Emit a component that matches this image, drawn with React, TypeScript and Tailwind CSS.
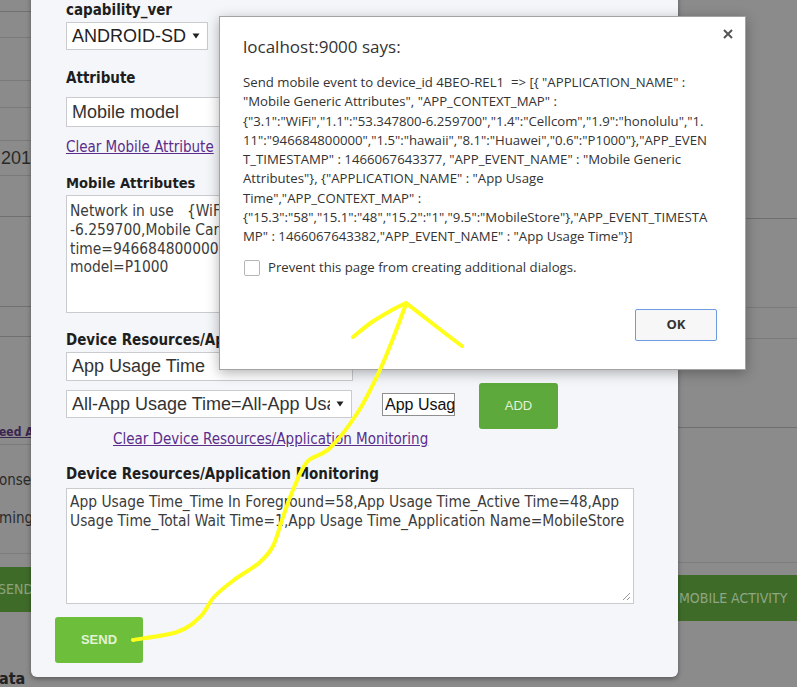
import React from "react";

const TAH = "font-['DejaVu_Sans_Condensed','DejaVu_Sans',sans-serif]";

function smooth(pts: [number, number][]) {
  let d = `M${pts[0][0]},${pts[0][1]}`;
  for (let i = 0; i < pts.length - 1; i++) {
    const p0 = pts[i - 1] || pts[i];
    const p1 = pts[i];
    const p2 = pts[i + 1];
    const p3 = pts[i + 2] || p2;
    const c1 = [p1[0] + (p2[0] - p0[0]) / 6, p1[1] + (p2[1] - p0[1]) / 6];
    const c2 = [p2[0] - (p3[0] - p1[0]) / 6, p2[1] - (p3[1] - p1[1]) / 6];
    d += ` C${c1[0]},${c1[1]} ${c2[0]},${c2[1]} ${p2[0]},${p2[1]}`;
  }
  return d;
}

function Caret() {
  return (
    <svg width="8" height="6" viewBox="0 0 8 6" className="shrink-0">
      <path d="M0.5 0.5 L7.5 0.5 L4 5.5 Z" fill="#222" />
    </svg>
  );
}

export default function App() {
  const shaft = smooth([
    [133, 640],
    [177, 632],
    [200, 617],
    [214, 597],
    [234, 580],
    [259, 563],
    [273, 546],
    [283, 517],
    [293, 490],
    [307, 462],
    [330, 448],
    [358, 412],
    [379, 372],
    [394, 336],
    [406, 304],
  ]);
  const leftWing = smooth([
    [353, 337],
    [372, 322],
    [392, 310],
    [406, 303],
  ]);
  const rightWing = smooth([
    [406, 303],
    [428, 320],
    [446, 334],
    [462, 346],
  ]);

  const msg = [
    'Send mobile event to device_id 4BEO-REL1  => [{ "APPLICATION_NAME" :',
    '"Mobile Generic Attributes", "APP_CONTEXT_MAP" :',
    '{"3.1":"WiFi","1.1":"53.347800-6.259700","1.4":"Cellcom","1.9":"honolulu","1.',
    '11":"946684800000","1.5":"hawaii","8.1":"Huawei","0.6":"P1000"},"APP_EVEN',
    'T_TIMESTAMP" : 1466067643377, "APP_EVENT_NAME" : "Mobile Generic',
    'Attributes"}, {"APPLICATION_NAME" : "App Usage',
    'Time","APP_CONTEXT_MAP" :',
    '{"15.3":"58","15.1":"48","15.2":"1","9.5":"MobileStore"},"APP_EVENT_TIMESTA',
    'MP" : 1466067643382,"APP_EVENT_NAME" : "App Usage Time"}]',
  ];

  return (
    <div className="relative w-[797px] h-[687px] overflow-hidden bg-[#8b8b8b]">
      {/* background page (dimmed) */}
      <div className={`grid grid-cols-[31px_1fr_119px] h-full ${TAH} text-[#262626]`}>
        <div className="flex flex-col overflow-hidden">
          <div className="h-[12px] shrink-0 border-b border-[#707070]" />
          <div className="h-[26px] shrink-0 border-b border-[#7a7a7a]" />
          <div className="h-[43px] shrink-0 border-b border-[#7a7a7a]" />
          <div className="h-[27px] shrink-0 border-b border-[#7a7a7a]" />
          <div className="h-[33px] shrink-0 border-b border-[#7a7a7a]" />
          <div className="h-[35px] shrink-0 border-b border-[#7a7a7a] flex items-center">
            <span className="whitespace-nowrap ml-[1px] font-['Liberation_Sans',sans-serif] text-[18px] text-[#2a2a2a]">201</span>
          </div>
          <div className="h-[41px] shrink-0 border-b border-[#707070]" />
          <div className="h-[90px] shrink-0 border-b border-[#707070]" />
          <div className="h-[30px] shrink-0 border-b border-[#707070]" />
          <div className="h-[83px] shrink-0" />
          <div className="h-[25px] shrink-0 flex items-center border-b border-[#7a7a7a]">
            <span className="whitespace-nowrap ml-[-1px] text-[12px] font-bold underline text-[#3a2450]">eed A</span>
          </div>
          <div className="h-[44px] shrink-0 flex items-end">
            <span className="whitespace-nowrap ml-[-1px] text-[15px] leading-[18px] text-[#2a2a2a]">onse</span>
          </div>
          <div className="h-[38px] shrink-0 flex items-end">
            <span className="whitespace-nowrap ml-[-1px] text-[15px] leading-[18px] text-[#2a2a2a]">ming</span>
          </div>
          <div className="h-[27px] shrink-0 border-b border-[#7d7d7d]" />
          <div className="h-[13px] shrink-0" />
          <div className="h-[45px] shrink-0 bg-[#3f6b29] flex items-center overflow-hidden">
            <span className="whitespace-nowrap ml-[-2px] text-[14px] text-[#8ba47e]">SEND</span>
          </div>
          <div className="flex-1 flex items-end">
            <span className="whitespace-nowrap ml-[-1px] text-[16px] font-bold leading-[16px] text-[#222]">ata</span>
          </div>
        </div>
        <div />
        <div className="flex flex-col">
          <div className="h-[219px] shrink-0 border-b border-[#6f6f6f]" />
          <div className="h-[89px] shrink-0 border-b border-[#7a7a7a]" />
          <div className="h-[31px] shrink-0 border-b border-[#7a7a7a]" />
          <div className="h-[89px] shrink-0 border-b border-[#6f6f6f]" />
          <div className="h-[135px] shrink-0 border-b border-[#7d7d7d]" />
          <div className="h-[12px] shrink-0" />
          <div className="h-[46px] shrink-0 bg-[#3f6b29] flex items-center pl-[1px]">
            <span className="whitespace-nowrap text-[14px] text-[#8fa684]">MOBILE ACTIVITY</span>
          </div>
        </div>
      </div>

      {/* modal */}
      <div className={`absolute left-[31px] top-[-12px] w-[647px] h-[689px] rounded-b-[6px] bg-[#f4f6fa] shadow-[0_2px_5px_rgba(0,0,0,0.35)] ${TAH}`}>
        <div className="flex flex-col items-start pl-[35px] pt-[13px]">
          <div className="h-[18px] leading-[18px] text-[15px] font-bold text-[#1e1e1e]">capability_ver</div>
          <div className="mt-[3px] h-[28px] w-[142px] bg-white border border-[#c9cbcf] flex items-center justify-between pl-[5px] pr-[7px] font-['Liberation_Sans',sans-serif] text-[18px] text-[#222]">
            <span>ANDROID-SD</span>
            <Caret />
          </div>
          <div className="mt-[19px] h-[18px] leading-[18px] text-[15px] font-bold text-[#1e1e1e]">Attribute</div>
          <div className="mt-[10px] h-[30px] w-[287px] bg-white border border-[#c9cbcf] flex items-center pl-[5px] font-['Liberation_Sans',sans-serif] text-[18px] text-[#333]">
            Mobile model
          </div>
          <div className="mt-[11px] h-[18px] leading-[18px] text-[15px] underline text-[#5b2d8a]">Clear Mobile Attribute</div>
          <div className="mt-[18px] h-[18px] leading-[18px] text-[14.6px] font-bold text-[#1e1e1e]">Mobile Attributes</div>
          <div className="mt-[3px] h-[118px] w-[568px] bg-white border border-[#c9cbcf] px-[3px] pt-[6px] text-[15.4px] leading-[18.8px] text-[#3c3c3c] whitespace-pre overflow-hidden">
            <div>Network in use   {"{"}WiFi{"}"},Location=53.347800</div>
            <div>-6.259700,Mobile Carrier=Cellcom,City=honolulu,Birth</div>
            <div>time=946684800000,State=hawaii,Manufacturer=Huawei,Mobile</div>
            <div>model=P1000</div>
          </div>
          <div className="mt-[18px] h-[18px] leading-[18px] text-[15px] font-bold text-[#1e1e1e] whitespace-nowrap">Device Resources/Application Monitoring</div>
          <div className="mt-[3px] h-[29px] w-[287px] bg-white border border-[#c9cbcf] flex items-center pl-[5px] font-['Liberation_Sans',sans-serif] text-[18px] text-[#333]">
            App Usage Time
          </div>
          <div className="mt-[2px] flex items-start">
            <div className="mt-[7px] h-[28px] w-[286px] bg-white border border-[#c9cbcf] flex items-center justify-between pl-[5px] pr-[7px] font-['Liberation_Sans',sans-serif] text-[18px] text-[#333]">
              <span className="whitespace-nowrap overflow-hidden w-[258px]">All-App Usage Time=All-App Usage Time</span>
              <Caret />
            </div>
            <div className="ml-[30px] mt-[10px] h-[23px] w-[73px] bg-white border border-[#8f8f8f] flex items-center pl-[2px] overflow-hidden font-['Liberation_Sans',sans-serif] text-[16px] text-[#111] whitespace-nowrap">
              App Usage
            </div>
            <div className="ml-[24px] h-[46px] w-[79px] rounded-[3px] bg-[#5da93b] flex items-center justify-center font-['Liberation_Sans',sans-serif] text-[13px] text-[#e2f2d6]">
              ADD
            </div>
          </div>
          <div className="mt-[1px] ml-[47px] h-[18px] leading-[18px] text-[15px] underline text-[#5b2d8a] whitespace-nowrap">Clear Device Resources/Application Monitoring</div>
          <div className="mt-[17px] h-[18px] leading-[18px] text-[15px] font-bold text-[#1e1e1e] whitespace-nowrap">Device Resources/Application Monitoring</div>
          <div className="relative mt-[5px] h-[116px] w-[568px] bg-white border border-[#c9cbcf] px-[3px] pt-[4px] text-[15.4px] leading-[19px] text-[#3c3c3c] whitespace-pre">
            <div>App Usage Time_Time In Foreground=58,App Usage Time_Active Time=48,App</div>
            <div>Usage Time_Total Wait Time=1,App Usage Time_Application Name=MobileStore</div>
            <svg width="9" height="9" viewBox="0 0 9 9" className="absolute right-[2px] bottom-[2px]">
              <path d="M8 1 L1 8 M8 5 L5 8" stroke="#9a9a9a" strokeWidth="1" />
            </svg>
          </div>
          <div className="mt-[13px] ml-[-11px] h-[46px] w-[88px] rounded-[3px] bg-[#6cbe3b] flex items-center justify-center font-['Liberation_Sans',sans-serif] font-bold text-[13px] text-[#e3f3d6]">
            SEND
          </div>
        </div>
      </div>

      {/* alert dialog */}
      <div className="absolute left-[219px] top-[16px] w-[527px] h-[354px] bg-white border border-[#a3a3a3] shadow-[0_3px_12px_rgba(0,0,0,0.3)] font-['Open_Sans',sans-serif] text-[#333]">
        <svg width="10" height="10" viewBox="0 0 10 10" className="absolute right-[12px] top-[12px]">
          <path d="M1 1 L9 9 M9 1 L1 9" stroke="#555" strokeWidth="2" />
        </svg>
        <div className="flex flex-col pl-[23px] pt-[19px] pr-[28px]">
          <div className="h-[22px] leading-[22px] text-[17px] text-[#333]">localhost:9000 says:</div>
          <div className="mt-[15px] text-[13.2px] leading-[19.3px] text-[#333]">
            {msg.map((l, i) => (
              <div key={i} className="whitespace-pre">{l}</div>
            ))}
          </div>
          <div className="mt-[11px] h-[20px] flex items-center gap-[8px]">
            <div className="w-[16px] h-[16px] ml-[1px] rounded-[2px] border border-[#b5b5b5] bg-white" />
            <span className="text-[13.2px] text-[#333]">Prevent this page from creating additional dialogs.</span>
          </div>
          <div className="mt-[31px] flex justify-end">
            <div className="w-[82px] h-[32px] rounded-[2px] border border-[#6c9be0] bg-[#f7f7f7] flex items-center justify-center text-[13px] font-bold text-[#333]">
              OK
            </div>
          </div>
        </div>
      </div>

      {/* yellow hand-drawn arrow */}
      <svg width="797" height="687" viewBox="0 0 797 687" className="absolute left-0 top-0 pointer-events-none">
        <g fill="none" stroke="#ffff1a" strokeWidth="4" strokeLinecap="round" strokeLinejoin="round">
          <path d={shaft} />
          <path d={leftWing} />
          <path d={rightWing} />
        </g>
      </svg>
    </div>
  );
}
